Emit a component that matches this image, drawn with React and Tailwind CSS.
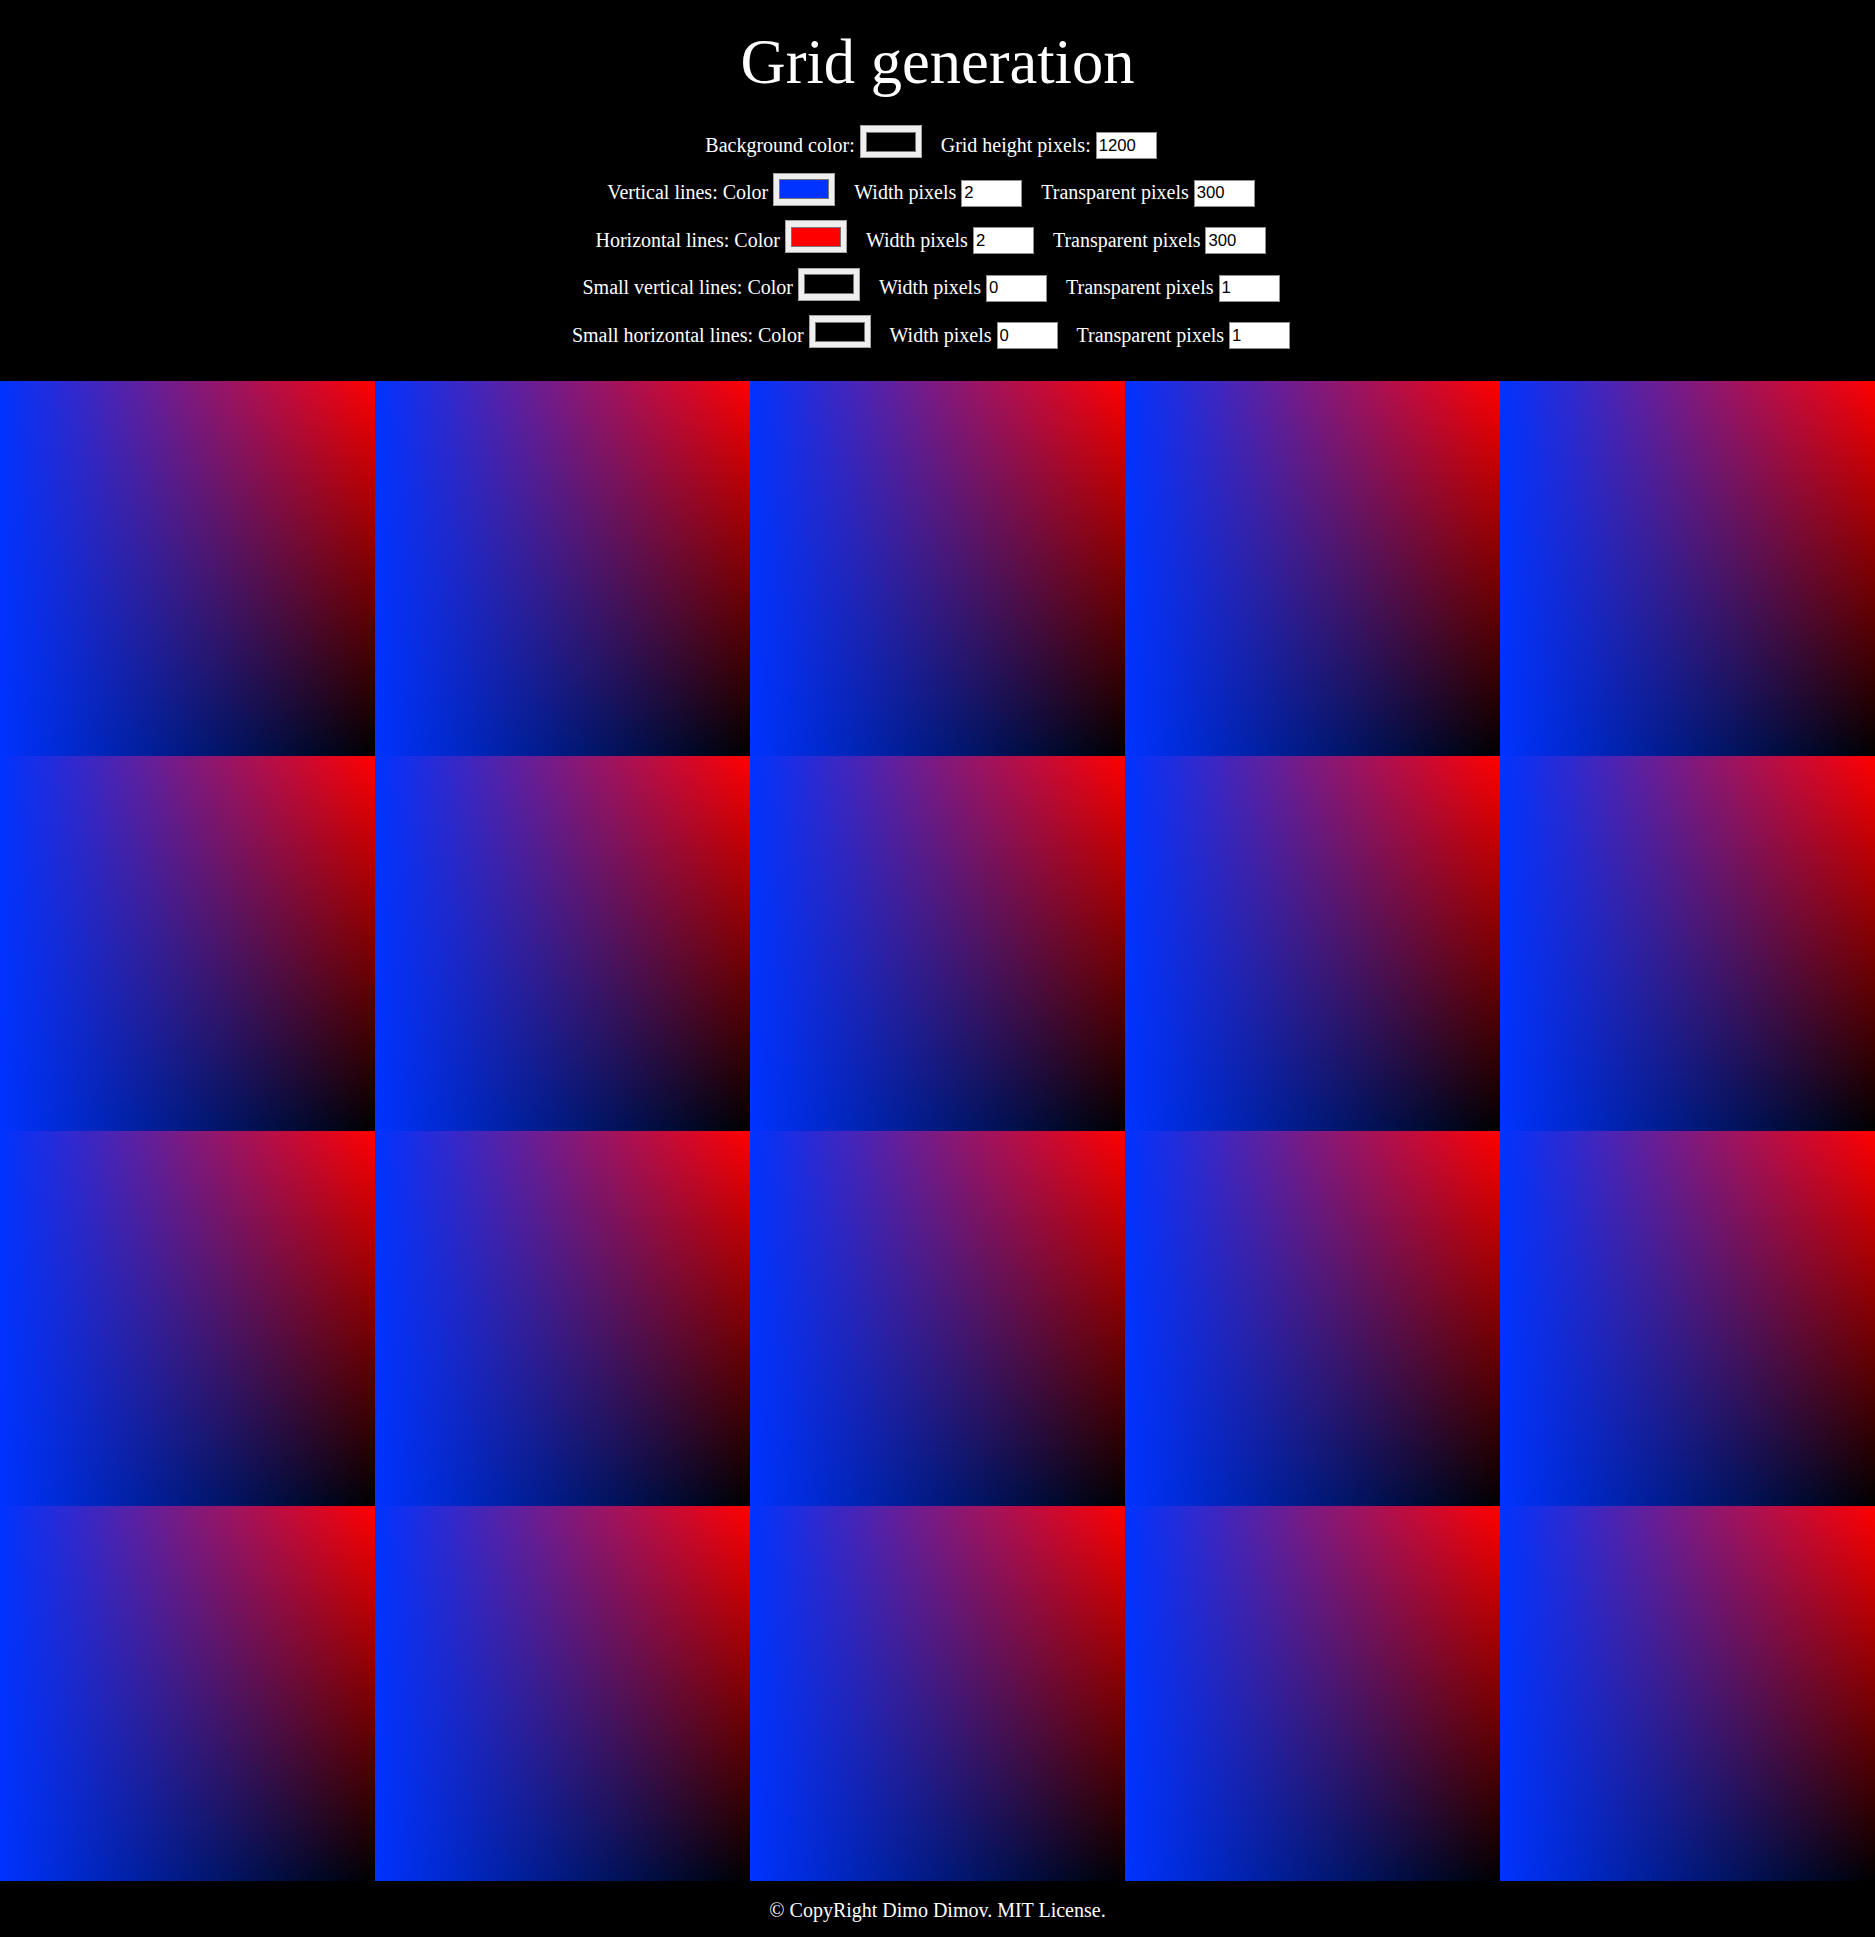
import React from "react";

const rows = [
  [
    { label: "Background color:", swatch: "bg-black" },
    { label: "Grid height pixels:", value: "1200" },
  ],
  [
    { label: "Vertical lines: Color", swatch: "bg-[#0033ff]" },
    { label: "Width pixels", value: "2" },
    { label: "Transparent pixels", value: "300" },
  ],
  [
    { label: "Horizontal lines: Color", swatch: "bg-[#ff0000]" },
    { label: "Width pixels", value: "2" },
    { label: "Transparent pixels", value: "300" },
  ],
  [
    { label: "Small vertical lines: Color", swatch: "bg-black" },
    { label: "Width pixels", value: "0" },
    { label: "Transparent pixels", value: "1" },
  ],
  [
    { label: "Small horizontal lines: Color", swatch: "bg-black" },
    { label: "Width pixels", value: "0" },
    { label: "Transparent pixels", value: "1" },
  ],
];

function Field({ field, first }) {
  return (
    <div className={`flex items-start ${first ? "" : "ml-[6px]"}`}>
      <span className="mt-[8.5px] leading-[23px] whitespace-pre">{field.label}</span>
      {field.swatch ? (
        <div className="ml-[5px] mr-[13px] flex h-[33px] w-[62px] items-center justify-center border border-[#a3a3a3] bg-[#efefef]">
          <div className={`h-[20px] w-[50px] border border-[#777777] ${field.swatch}`} />
        </div>
      ) : (
        <input
          type="text"
          defaultValue={field.value}
          className="ml-[5px] mr-[13px] mt-[7px] h-[27px] w-[61px] border border-[#8f8f8f] bg-white px-[2px] text-[16.7px] text-black outline-none [font-family:'Liberation_Sans',Arial,sans-serif]"
        />
      )}
    </div>
  );
}

export default function App() {
  const tiles = Array.from({ length: 20 });
  return (
    <div className="min-h-screen bg-black text-white [font-family:'Liberation_Serif','Times_New_Roman',serif]">
      <h1 className="pt-[26px] text-center text-[62.5px] font-normal leading-[72px]">
        Grid generation
      </h1>
      <div className="mt-[27px] flex flex-col gap-[14.5px] text-[20px]">
        {rows.map((row, i) => (
          <div key={i} className="flex h-[33px] items-start justify-center">
            {row.map((f, j) => (
              <Field key={j} field={f} first={j === 0} />
            ))}
          </div>
        ))}
      </div>
      <div className="mt-[33px] grid grid-cols-5">
        {tiles.map((_, i) => (
          <div
            key={i}
            className="h-[375px] bg-black bg-[image:linear-gradient(to_right,#0033ff,transparent),linear-gradient(to_bottom,#ff0000,transparent)]"
          />
        ))}
      </div>
      <footer className="h-[56px] pt-[17.5px] text-center text-[20px] leading-[23px]">
        © CopyRight Dimo Dimov. MIT License.
      </footer>
    </div>
  );
}
